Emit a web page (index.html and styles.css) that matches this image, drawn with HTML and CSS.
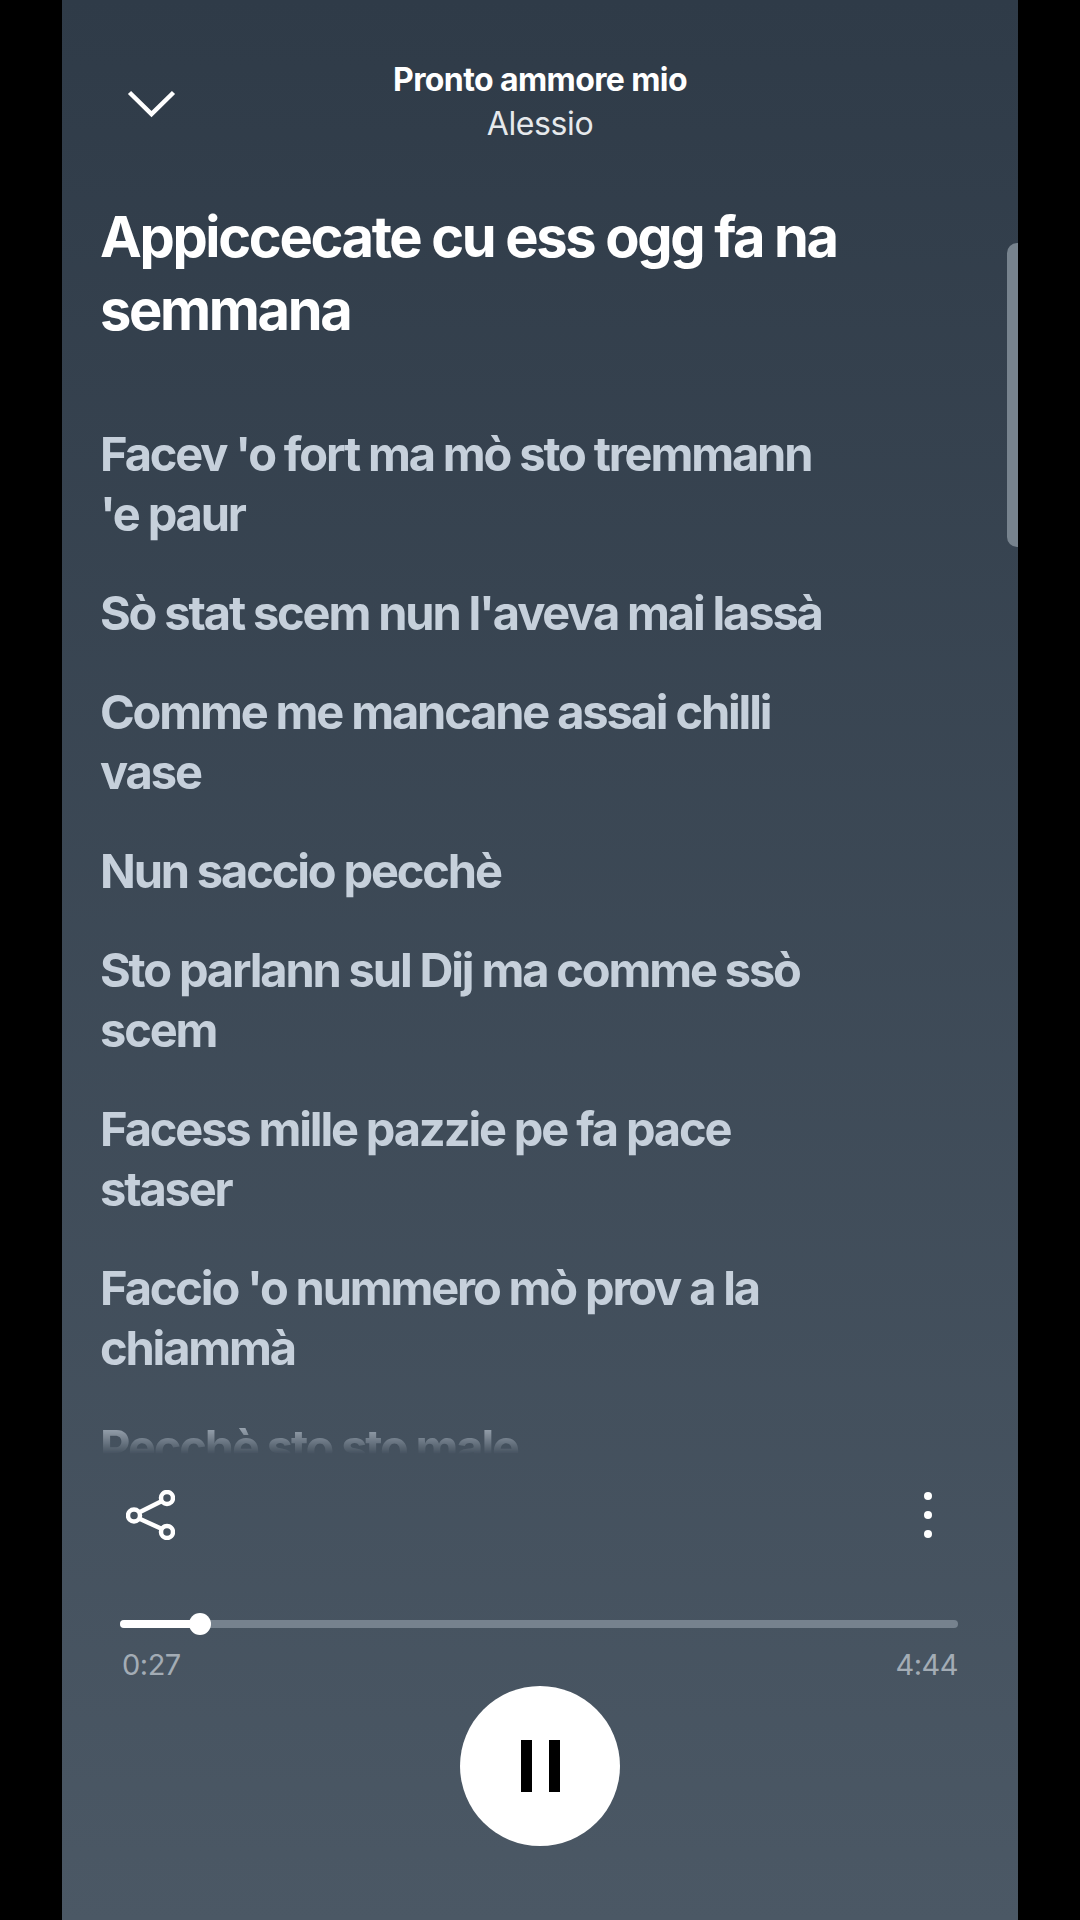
FILE: index.html
```html
<!DOCTYPE html>
<html>
<head>
    <title>Pronto ammore mio - Testo</title>
    <link rel="stylesheet" href="styles.css">
</head>
<body>
    <div class="screen">
        <div class="thumb"></div>
        <header class="top">
            <svg class="chevron" width="49" height="28" viewBox="0 0 49 28">
                <path d="M2.5 2.5 L24.5 24 L46.5 2.5" fill="none" stroke="#fff" stroke-width="4.5"/>
            </svg>
            <div class="track">
                <div class="track-name">Pronto ammore mio</div>
                <div class="artist">Alessio</div>
            </div>
        </header>
        <h1 class="title">Appiccecate cu ess ogg fa na semmana</h1>
        <div class="lyrics">
            <p>Facev 'o fort ma mò sto tremmann<br>'e paur</p>
            <p>Sò stat scem nun l'aveva mai lassà</p>
            <p>Comme me mancane assai chilli<br>vase</p>
            <p>Nun saccio pecchè</p>
            <p>Sto parlann sul Dij ma comme ssò<br>scem</p>
            <p>Facess mille pazzie pe fa pace<br>staser</p>
            <p>Faccio 'o nummero mò prov a la<br>chiammà</p>
            <p>Pecchè sto sto male</p>
        </div>
        <div class="actions">
            <svg width="49" height="50" viewBox="0 0 49 50" fill="none" stroke="#fff" stroke-width="4.5">
                <path d="M13 22.5 L36 11 M13 28.5 L36 39"/>
                <circle cx="8" cy="25.5" r="6"/>
                <circle cx="41" cy="8" r="6"/>
                <circle cx="41" cy="42" r="6"/>
            </svg>
            <div class="dots"><span></span><span></span><span></span></div>
        </div>
        <div class="progress">
            <div class="bar">
                <div class="bar-fill"></div>
                <div class="knob"></div>
            </div>
            <div class="times"><span>0:27</span><span>4:44</span></div>
        </div>
        <div class="play">
            <div class="pause"><span></span><span></span></div>
        </div>
    </div>
</body>
</html>
```

FILE: styles.css
```css
body {
    margin: 0;
    background: #000;
    font-family: "Inter", "Liberation Sans", sans-serif;
    color: #fff;
}
.screen {
    position: relative;
    width: 956px;
    height: 1920px;
    margin: 0 auto;
    background: linear-gradient(#2f3b48, #4b5865);
    overflow: hidden;
}
.thumb {
    position: absolute;
    top: 243px;
    right: 0;
    width: 11px;
    height: 304px;
    background: #77838e;
    border-radius: 10px 0 0 10px;
}
.top {
    position: relative;
    display: flex;
    justify-content: center;
    padding-top: 59px;
}
.chevron {
    position: absolute;
    left: 65px;
    top: 90px;
}
.track {
    text-align: center;
}
.track-name {
    font-size: 32px;
    font-weight: 700;
    line-height: 42px;
    letter-spacing: -0.6px;
}
.artist {
    font-size: 32px;
    line-height: 46px;
    letter-spacing: -0.4px;
    color: #e6e9ec;
}
.title {
    margin: 54px 0 0;
    padding: 0 38px;
    width: 820px;
    font-size: 56px;
    font-weight: 700;
    line-height: 73px;
    letter-spacing: -2.35px;
}
.lyrics {
    margin-top: 77px;
    padding: 0 38px;
    height: 1030px;
    overflow: hidden;
    color: #c6d0db;
    font-size: 47px;
    font-weight: 700;
    line-height: 60px;
    letter-spacing: -2.15px;
    -webkit-mask-image: linear-gradient(#000 990px, transparent 1030px);
    mask-image: linear-gradient(#000 990px, transparent 1030px);
}
.lyrics p {
    margin: 0 0 39px;
}
.actions {
    display: flex;
    justify-content: space-between;
    align-items: center;
    padding: 36px 86px 0 64px;
}
.dots {
    display: flex;
    flex-direction: column;
    gap: 11px;
}
.dots span {
    width: 8px;
    height: 8px;
    border-radius: 50%;
    background: #fff;
}
.progress {
    padding: 80px 60px 0 58px;
}
.bar {
    position: relative;
    height: 8px;
    border-radius: 4px;
    background: #76828e;
}
.bar-fill {
    width: 80px;
    height: 8px;
    border-radius: 4px;
    background: #fff;
}
.knob {
    position: absolute;
    left: 69px;
    top: -7px;
    width: 22px;
    height: 22px;
    border-radius: 50%;
    background: #fff;
}
.times {
    display: flex;
    justify-content: space-between;
    margin-top: 20px;
    padding-left: 2px;
    font-size: 29px;
    line-height: 34px;
    font-weight: 400;
    letter-spacing: -0.5px;
    color: #a3acb5;
}
.play {
    display: flex;
    align-items: center;
    justify-content: center;
    width: 160px;
    height: 160px;
    margin: 4px auto 0;
    border-radius: 50%;
    background: #fff;
}
.pause {
    display: flex;
    gap: 17px;
}
.pause span {
    width: 11px;
    height: 52px;
    background: #000;
}
```
